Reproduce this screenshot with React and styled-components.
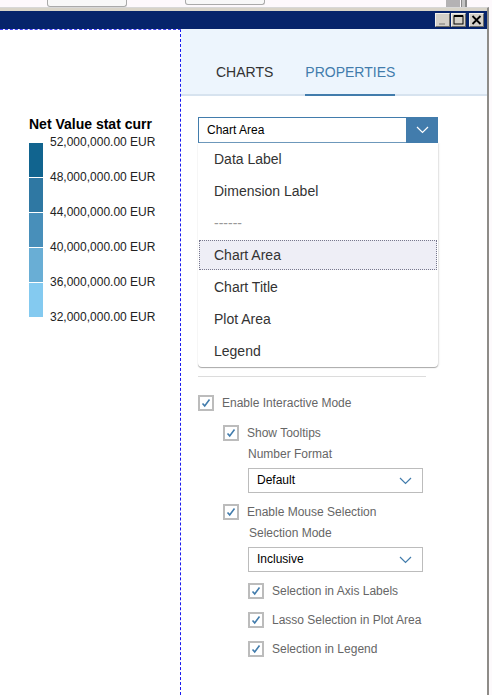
import React from "react";
import styled, { createGlobalStyle } from "styled-components";

const GlobalStyle = createGlobalStyle`
  html, body {
    margin: 0;
    padding: 0;
    background: #fff;
    font-family: "Liberation Sans", Arial, sans-serif;
  }
`;

const Page = styled.div`
  width: 492px;
  height: 695px;
  display: flex;
  flex-direction: column;
  overflow: hidden;
  background: #fdfafc;
`;
const TopStrip = styled.div`
  height: 7px;
  flex: none;
  display: flex;
  align-items: flex-start;
  background: #fdf9fc;
  padding-left: 47px;
`;
const BrowserTab = styled.div`
  width: ${(p) => p.$width}px;
  height: ${(p) => p.$height}px;
  margin-right: ${(p) => p.$gap}px;
  box-sizing: border-box;
  background: #f8f8f8;
  border: 1px solid #aaa;
  border-top: 0;
  border-radius: 0 0 3px 3px;
`;
const ScrollStub = styled.div`
  width: 24px;
  height: 7px;
  background: linear-gradient(90deg, #b4b2b4 0 14px, #fdf9fc 14px 15px, #8a8a8a 15px 16px, #c4c4c4 16px 19px, #8a8a8a 19px 21px, #fdf9fc 21px);
`;
const Frame = styled.div`
  flex: 1;
  min-height: 0;
  width: 489px;
  box-sizing: border-box;
  display: flex;
  flex-direction: column;
  background: #fff;
  border-top: 1px solid #d8d8d8;
  border-right: 2px solid #8e8c88;
`;
const TitleBar = styled.div`
  height: 18px;
  flex: none;
  display: flex;
  align-items: center;
  justify-content: flex-end;
  gap: 1px;
  padding-right: 3px;
  background: #06246b;
  border-top: 3px solid #d8d4c8;
`;
const WinButton = styled.div`
  width: 15px;
  height: 14px;
  margin-left: ${(p) => p.$gap || 0}px;
  display: flex;
  align-items: center;
  justify-content: center;
  background: #d4d0c8;
  box-sizing: border-box;
  border: 1px solid;
  border-color: #f2f0ea #6a6a66 #6a6a66 #f2f0ea;
`;
const Body = styled.div`
  flex: 1;
  min-height: 0;
  display: flex;
`;
const Canvas = styled.div`
  width: 181px;
  flex: none;
  box-sizing: border-box;
  padding: 86px 0 0 29px;
  border-top: 1px dashed #3a3af0;
  border-right: 1px dashed #1a1af0;
`;
const LegendTitle = styled.div`
  font-size: 14px;
  line-height: 16px;
  font-weight: 700;
  color: #000;
  white-space: nowrap;
  margin-bottom: 3px;
`;
const LegendRow = styled.div`
  display: flex;
  gap: 7px;
`;
const LegendBar = styled.div`
  width: 14px;
  height: 174px;
  margin-top: 8px;
  display: flex;
  flex-direction: column;
  gap: 1px;
`;
const LegendSwatch = styled.div`
  flex: 1;
  background: ${(p) => p.$color};
`;
const LegendLabels = styled.div`
  display: flex;
  flex-direction: column;
  gap: 21px;
  font-size: 12px;
  line-height: 14px;
  color: #222;
  white-space: nowrap;
`;
const Panel = styled.div`
  flex: 1;
  min-width: 0;
`;
const TabBar = styled.div`
  height: 67px;
  box-sizing: border-box;
  display: flex;
  align-items: flex-end;
  gap: 32px;
  padding-left: 35px;
  background: #edf5fd;
  border-bottom: 2px solid #d7e3ef;
`;
const Tab = styled.div`
  height: 33px;
  margin-bottom: -2px;
  font-size: 14px;
  line-height: 18px;
  box-sizing: border-box;
  color: ${(p) => (p.$active ? "#427cac" : "#333")};
  border-bottom: 2px solid ${(p) => (p.$active ? "#427cac" : "transparent")};
`;
const Content = styled.div`
  padding: 21px 0 0 17px;
`;
const ComboBox = styled.div`
  width: 240px;
  height: 26px;
  box-sizing: border-box;
  display: flex;
  border: 1px solid #427cac;
  background: #fff;
`;
const ComboText = styled.div`
  flex: 1;
  font-size: 12px;
  line-height: 24px;
  padding-left: 8px;
  color: #000;
`;
const ComboArrow = styled.div`
  width: 32px;
  margin: -1px -1px -1px 0;
  display: flex;
  align-items: center;
  justify-content: center;
  background: #427cac;
`;
const Menu = styled.div`
  width: 240px;
  height: 224px;
  background: #fff;
  border-radius: 0 0 4px 4px;
  box-shadow: 0 1px 1px #a8a8a8, 1px 0 2px #e6e6e6;
`;
const MenuItem = styled.div`
  height: 32px;
  box-sizing: border-box;
  padding-left: 16px;
  font-size: 14px;
  line-height: 32px;
  color: ${(p) => (p.$muted ? "#999" : "#333")};
`;
const SelectedItem = styled(MenuItem)`
  height: 30px;
  margin: 1px;
  padding-left: 14px;
  line-height: 28px;
  background: #eeeef6;
  border: 1px dotted #77778c;
`;
const Divider = styled.div`
  width: 228px;
  height: 1px;
  margin: 9px 0 18px;
  background: #dcdcdc;
`;
const CheckRow = styled.div`
  display: flex;
  align-items: center;
  height: 16px;
  margin-left: ${(p) => p.$indent || 0}px;
  margin-top: ${(p) => p.$top || 0}px;
`;
const CheckBox = styled.div`
  width: 16px;
  height: 16px;
  flex: none;
  box-sizing: border-box;
  display: flex;
  align-items: center;
  justify-content: center;
  background: #fff;
  border: 2px solid #bcbcbc;
`;
const CheckLabel = styled.span`
  font-size: 12px;
  line-height: 16px;
  color: #666;
  margin-left: 8px;
  white-space: nowrap;
`;
const FieldLabel = styled.div`
  font-size: 12px;
  line-height: 14px;
  color: #666;
  margin: ${(p) => p.$top}px 0 0 ${(p) => p.$indent}px;
`;
const SelectBox = styled.div`
  width: 175px;
  height: 25px;
  box-sizing: border-box;
  margin: ${(p) => p.$top}px 0 0 50px;
  padding: 0 10px 0 8px;
  display: flex;
  align-items: center;
  justify-content: space-between;
  font-size: 12px;
  color: #000;
  border: 1px solid #bcbcbc;
  background: #fff;
`;
const SelectValue = styled.span`
  margin-bottom: 2px;
`;

const Chevron = ({ color }) => (
  <svg width="13" height="8" viewBox="0 0 13 8" fill="none">
    <path d="M1 1l5.5 5.5L12 1" stroke={color} strokeWidth="1.2" />
  </svg>
);

const Check = () => (
  <svg width="10" height="10" viewBox="0 0 10 10" fill="none">
    <path d="M1.5 5.5l2.2 2.4L8.5 1.5" stroke="#427cac" strokeWidth="1.6" />
  </svg>
);

const Checked = ({ label, indent, top }) => (
  <CheckRow $indent={indent} $top={top}>
    <CheckBox>
      <Check />
    </CheckBox>
    <CheckLabel>{label}</CheckLabel>
  </CheckRow>
);

const swatches = ["#11648f", "#2f78a3", "#488fba", "#69aed5", "#84caf0"];
const legend = ["52,000,000.00", "48,000,000.00", "44,000,000.00", "40,000,000.00", "36,000,000.00", "32,000,000.00"];

export default function App() {
  return (
    <Page>
      <GlobalStyle />
      <TopStrip>
        <BrowserTab $width={80} $height={7} $gap={58} />
        <BrowserTab $width={80} $height={5} $gap={181} />
        <ScrollStub />
      </TopStrip>
      <Frame>
        <TitleBar>
          <WinButton>
            <svg width="11" height="10" viewBox="0 0 11 10">
              <rect x="2" y="8" width="6" height="2" fill="#a5a39d" />
            </svg>
          </WinButton>
          <WinButton>
            <svg width="11" height="10" viewBox="0 0 11 10" fill="none">
              <rect x="1" y="1" width="9" height="8" stroke="#000" />
              <rect x="1" y="0" width="9" height="2" fill="#000" />
            </svg>
          </WinButton>
          <WinButton $gap={2}>
            <svg width="11" height="10" viewBox="0 0 11 10" fill="none">
              <path d="M1.5 1l8 8M9.5 1l-8 8" stroke="#000" strokeWidth="1.8" />
            </svg>
          </WinButton>
        </TitleBar>
        <Body>
          <Canvas>
            <LegendTitle>Net Value stat curr</LegendTitle>
            <LegendRow>
              <LegendBar>
                {swatches.map((c) => (
                  <LegendSwatch key={c} $color={c} />
                ))}
              </LegendBar>
              <LegendLabels>
                {legend.map((v) => (
                  <div key={v}>{v} EUR</div>
                ))}
              </LegendLabels>
            </LegendRow>
          </Canvas>
          <Panel>
            <TabBar>
              <Tab>CHARTS</Tab>
              <Tab $active>PROPERTIES</Tab>
            </TabBar>
            <Content>
              <ComboBox>
                <ComboText>Chart Area</ComboText>
                <ComboArrow>
                  <Chevron color="#fff" />
                </ComboArrow>
              </ComboBox>
              <Menu>
                <MenuItem>Data Label</MenuItem>
                <MenuItem>Dimension Label</MenuItem>
                <MenuItem $muted>------</MenuItem>
                <SelectedItem>Chart Area</SelectedItem>
                <MenuItem>Chart Title</MenuItem>
                <MenuItem>Plot Area</MenuItem>
                <MenuItem>Legend</MenuItem>
              </Menu>
              <Divider />
              <Checked label="Enable Interactive Mode" />
              <Checked label="Show Tooltips" indent={25} top={14} />
              <FieldLabel $indent={50} $top={6}>Number Format</FieldLabel>
              <SelectBox $top={7}>
                <SelectValue>Default</SelectValue>
                <Chevron color="#427cac" />
              </SelectBox>
              <Checked label="Enable Mouse Selection" indent={25} top={11} />
              <FieldLabel $indent={51} $top={6}>Selection Mode</FieldLabel>
              <SelectBox $top={7}>
                <SelectValue>Inclusive</SelectValue>
                <Chevron color="#427cac" />
              </SelectBox>
              <Checked label="Selection in Axis Labels" indent={50} top={11} />
              <Checked label="Lasso Selection in Plot Area" indent={50} top={13} />
              <Checked label="Selection in Legend" indent={50} top={13} />
            </Content>
          </Panel>
        </Body>
      </Frame>
    </Page>
  );
}
